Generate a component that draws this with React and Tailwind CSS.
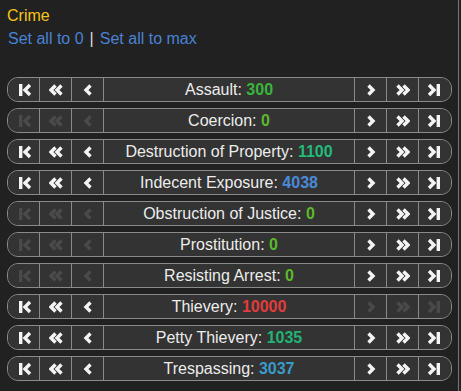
import React from 'react';

const rows = [
  { name: 'Assault', value: '300', color: 'text-[#3cb43c]', left: true, right: true },
  { name: 'Coercion', value: '0', color: 'text-[#5cb82c]', left: false, right: true },
  { name: 'Destruction of Property', value: '1100', color: 'text-[#22bb7a]', left: true, right: true },
  { name: 'Indecent Exposure', value: '4038', color: 'text-[#4a8ad8]', left: true, right: true },
  { name: 'Obstruction of Justice', value: '0', color: 'text-[#5cb82c]', left: false, right: true },
  { name: 'Prostitution', value: '0', color: 'text-[#5cb82c]', left: false, right: true },
  { name: 'Resisting Arrest', value: '0', color: 'text-[#5cb82c]', left: false, right: true },
  { name: 'Thievery', value: '10000', color: 'text-[#e23c3c]', left: true, right: false },
  { name: 'Petty Thievery', value: '1035', color: 'text-[#22b274]', left: true, right: true },
  { name: 'Trespassing', value: '3037', color: 'text-[#3a9ac8]', left: true, right: true },
];

const Icon = ({ kind, enabled }) => {
  const stroke = enabled ? '#f4f4f4' : '#4a4a4a';
  const flip = kind.startsWith('r');
  return (
    <svg width="14" height="14" viewBox="0 0 14 14" style={flip ? { transform: 'scaleX(-1)' } : undefined}>
      <g fill="none" stroke={stroke} strokeWidth="3.4" strokeLinejoin="miter" strokeLinecap="butt">
        {(kind === 'lfirst' || kind === 'rlast') && (
          <>
            <line x1="2.7" y1="1" x2="2.7" y2="13" />
            <polyline points="12,2 7,7 12,12" />
          </>
        )}
        {(kind === 'ldouble' || kind === 'rdouble') && (
          <>
            <polyline points="6.5,2.5 2,7 6.5,11.5" />
            <polyline points="12.5,2.5 8,7 12.5,11.5" />
          </>
        )}
        {(kind === 'lone' || kind === 'rone') && <polyline points="9.5,2.5 5,7 9.5,11.5" />}
      </g>
    </svg>
  );
};

const Btn = ({ kind, enabled, className }) => (
  <button className={`flex items-center justify-center bg-[#333333] ${className}`}>
    <Icon kind={kind} enabled={enabled} />
  </button>
);

const Row = ({ row }) => (
  <div className="flex h-[25px] rounded-[11px] border border-[#8a8a8a] overflow-hidden bg-[#333333]">
    <Btn kind="lfirst" enabled={row.left} className="w-[32px] border-r border-[#8a8a8a] pl-[2px]" />
    <Btn kind="ldouble" enabled={row.left} className="w-[32px] border-r border-[#8a8a8a]" />
    <Btn kind="lone" enabled={row.left} className="w-[32px] border-r border-[#8a8a8a]" />
    <div className="flex-1 flex items-center justify-center text-[16px] text-[#ececec] border-r border-[#8a8a8a]">
      {row.name}:&nbsp;<span className={`font-bold ${row.color}`}>{row.value}</span>
    </div>
    <Btn kind="rone" enabled={row.right} className="w-[32px] border-r border-[#8a8a8a]" />
    <Btn kind="rdouble" enabled={row.right} className="w-[32px] border-r border-[#8a8a8a]" />
    <Btn kind="rlast" enabled={row.right} className="w-[32px] pr-[2px]" />
  </div>
);

export default function App() {
  return (
    <div className="w-[461px] h-[391px] bg-[#212121] font-['Liberation_Sans',Arial,sans-serif]">
      <div className="w-[459px] h-full border-r border-[#7a7a7a] pl-[7px] pr-[6px] pt-[6px]">
        <div className="text-[16px] text-[#f5c518] leading-[20px]">Crime</div>
        <div className="text-[16px] leading-[20px] mt-[3px]">
          <span className="text-[#4a82d4] ml-[1px]">Set all to 0</span>
          <span className="text-[#dddddd] mx-[6px]">|</span>
          <span className="text-[#4a82d4]">Set all to max</span>
        </div>
        <div className="mt-[28px] flex flex-col gap-[6px]">
          {rows.map((r) => (
            <Row key={r.name} row={r} />
          ))}
        </div>
      </div>
    </div>
  );
}
